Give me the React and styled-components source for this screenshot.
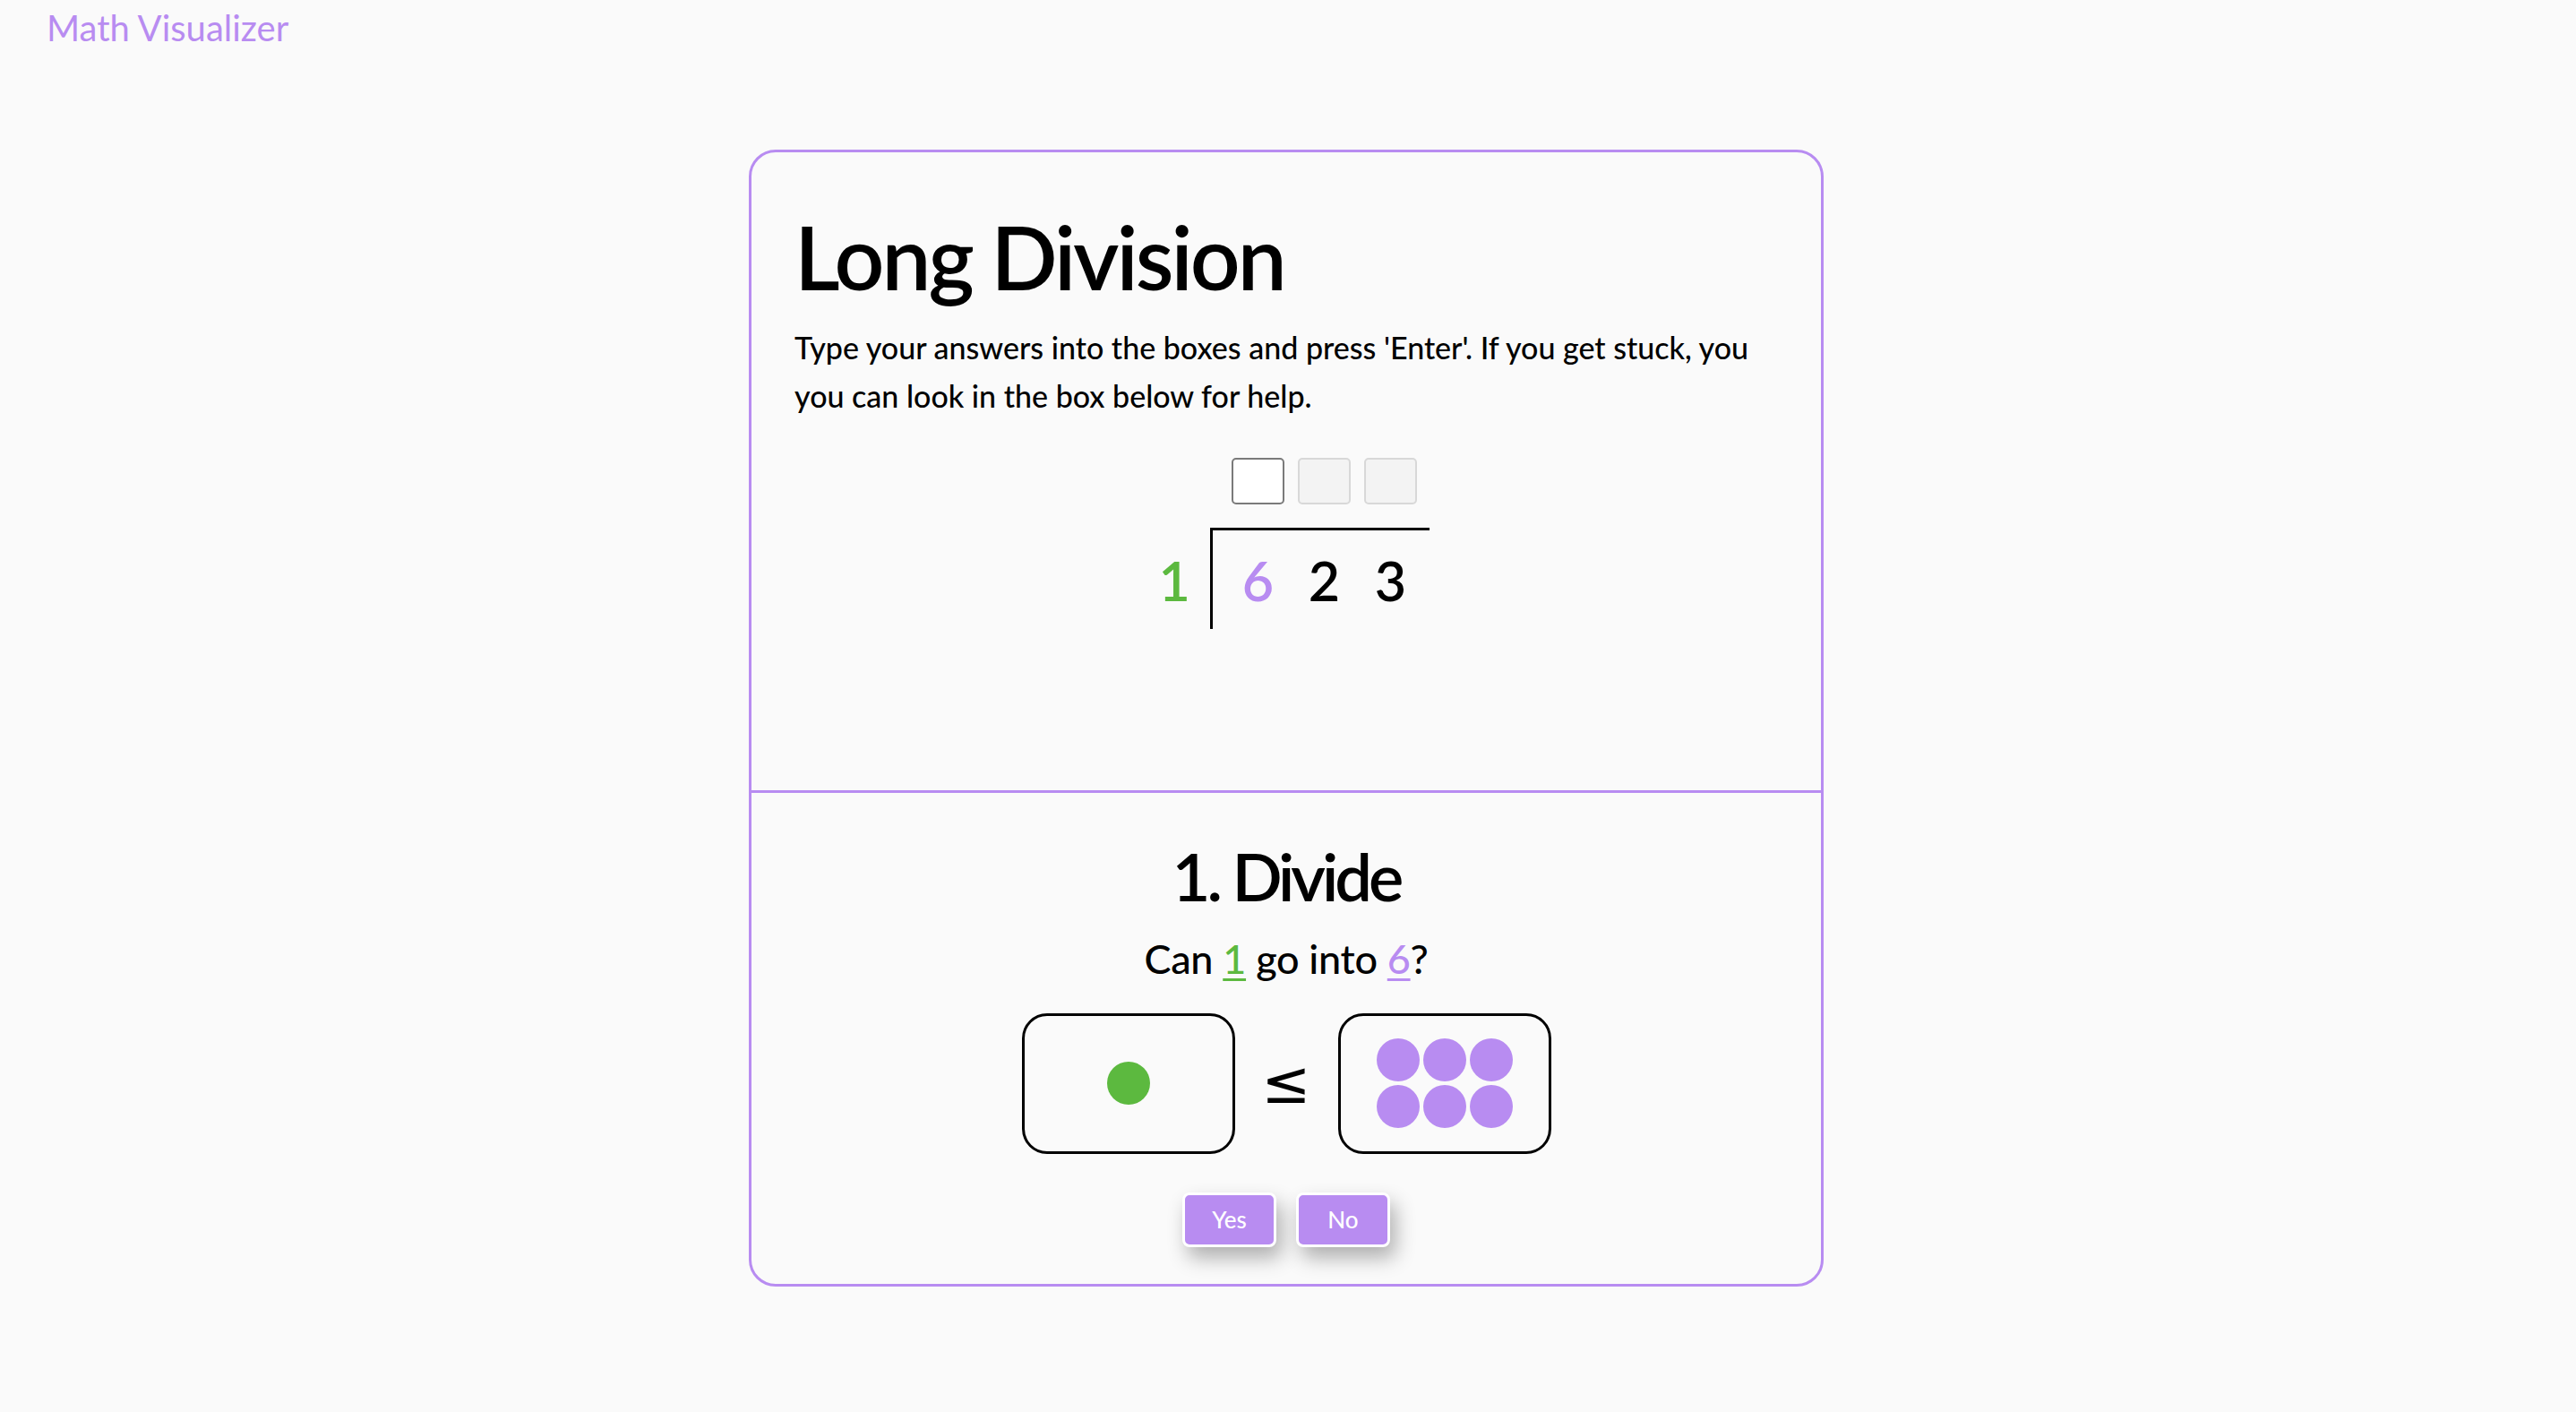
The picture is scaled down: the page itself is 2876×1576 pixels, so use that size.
import React from 'react';
import styled, { createGlobalStyle } from 'styled-components';

const purple = '#b88cf1';
const green = '#5cb93f';

const GlobalStyle = createGlobalStyle`
  html, body {
    margin: 0;
    padding: 0;
    background: #fafafa;
  }
  body {
    font-family: Lato, 'Open Sans', sans-serif;
    color: #000;
  }
`;

const Page = styled.div`
  min-height: 1576px;
`;

const Brand = styled.header`
  padding: 7px 0 0 52px;
  font-size: 40px;
  line-height: 1.2;
  color: ${purple};
`;

const Card = styled.main`
  width: 1200px;
  box-sizing: border-box;
  margin: 112px 0 0 calc(50% - 602px);
  border: 3px solid ${purple};
  border-radius: 30px;
`;

const TopSection = styled.section`
  padding: 58px 48px 180px;
`;

const Title = styled.h1`
  margin: 0;
  font-size: 98px;
  font-weight: 600;
  line-height: 1.2;
  letter-spacing: -3px;
`;

const Intro = styled.p`
  margin: 15px 0 0;
  font-size: 34px;
  font-weight: 500;
  line-height: 54px;
`;

const Division = styled.div`
  margin-top: 42px;
  display: flex;
  flex-direction: column;
  align-items: center;
`;

const DivRow = styled.div`
  display: flex;
  align-items: baseline;
  margin-top: ${(p) => p.$gap || 0}px;
`;

const Lead = styled.div`
  width: 75px;
  box-sizing: border-box;
  padding-right: 22px;
  text-align: right;
  font-size: 61px;
  font-weight: 600;
  line-height: 1.2;
  color: ${green};
`;

const Cells = styled.div`
  display: grid;
  grid-template-columns: repeat(3, 59px);
  column-gap: 15px;
  padding: 0 14px 0 24px;
`;

const Bracket = styled(Cells)`
  border-top: 3px solid #000;
  border-left: 3px solid #000;
  padding: 19px 14px 18px 21px;
`;

const AnswerBox = styled.input`
  width: 59px;
  height: 52px;
  box-sizing: border-box;
  border-radius: 5px;
  border: 2px solid ${(p) => (p.disabled ? '#d8d8d8' : '#7a7a7a')};
  background: ${(p) => (p.disabled ? '#f3f3f3' : '#fff')};
  font: 32px Lato, sans-serif;
  text-align: center;
  outline: none;
`;

const Digit = styled.span`
  text-align: center;
  font-size: 61px;
  font-weight: 600;
  line-height: 1.2;
  color: ${(p) => p.$color || '#000'};
`;

const BottomSection = styled.section`
  border-top: 3px solid ${purple};
  padding: 49px 0 41px;
  display: flex;
  flex-direction: column;
  align-items: center;
`;

const StepTitle = styled.h2`
  margin: 0;
  font-size: 74px;
  font-weight: 600;
  line-height: 1.2;
  letter-spacing: -4px;
`;

const Question = styled.p`
  margin: 20px 0 0;
  font-size: 45px;
  font-weight: 500;
  line-height: 1.2;
  letter-spacing: -0.3px;
`;

const Mark = styled.span`
  color: ${(p) => p.$color};
  text-decoration: underline;
  text-decoration-thickness: 3px;
  text-underline-offset: 5px;
`;

const CompareRow = styled.div`
  margin-top: 34px;
  display: flex;
  align-items: center;
`;

const CountBox = styled.div`
  width: 238px;
  height: 157px;
  box-sizing: border-box;
  border: 3px solid #000;
  border-radius: 28px;
  display: flex;
  align-items: center;
  justify-content: center;
`;

const DotGrid = styled.div`
  display: grid;
  grid-template-columns: repeat(${(p) => p.$cols}, 48px);
  gap: 4px;
`;

const Dot = styled.span`
  width: 48px;
  height: 48px;
  border-radius: 50%;
  background: ${(p) => p.$color};
`;

const Symbol = styled.span`
  width: 115px;
  text-align: center;
  font-family: 'DejaVu Sans', sans-serif;
  font-size: 66px;
  line-height: 1;
`;

const ButtonRow = styled.div`
  margin-top: 43px;
  display: flex;
  gap: 22px;
`;

const Button = styled.button`
  width: 105px;
  height: 61px;
  box-sizing: border-box;
  border: 3px solid #fff;
  border-radius: 8px;
  background: ${purple};
  color: #fff;
  font: 500 26px Lato, sans-serif;
  cursor: pointer;
  box-shadow: 6px 12px 22px rgba(0, 0, 0, 0.3);
`;

const dividend = [
  { d: '6', color: purple },
  { d: '2' },
  { d: '3' },
];

export default function App() {
  return (
    <Page>
      <GlobalStyle />
      <Brand>Math Visualizer</Brand>
      <Card>
        <TopSection>
          <Title>Long Division</Title>
          <Intro>
            Type your answers into the boxes and press 'Enter'. If you get stuck, you
            you can look in the box below for help.
          </Intro>
          <Division>
            <DivRow>
              <Lead />
              <Cells>
                <AnswerBox autoComplete="off" />
                <AnswerBox disabled />
                <AnswerBox disabled />
              </Cells>
            </DivRow>
            <DivRow $gap={26}>
              <Lead>1</Lead>
              <Bracket>
                {dividend.map((x, i) => (
                  <Digit key={i} $color={x.color}>
                    {x.d}
                  </Digit>
                ))}
              </Bracket>
            </DivRow>
          </Division>
        </TopSection>
        <BottomSection>
          <StepTitle>1. Divide</StepTitle>
          <Question>
            Can <Mark $color={green}>1</Mark> go into <Mark $color={purple}>6</Mark>?
          </Question>
          <CompareRow>
            <CountBox>
              <Dot $color={green} />
            </CountBox>
            <Symbol>≤</Symbol>
            <CountBox>
              <DotGrid $cols={3}>
                {Array.from({ length: 6 }).map((_, i) => (
                  <Dot key={i} $color={purple} />
                ))}
              </DotGrid>
            </CountBox>
          </CompareRow>
          <ButtonRow>
            <Button>Yes</Button>
            <Button>No</Button>
          </ButtonRow>
        </BottomSection>
      </Card>
    </Page>
  );
}
